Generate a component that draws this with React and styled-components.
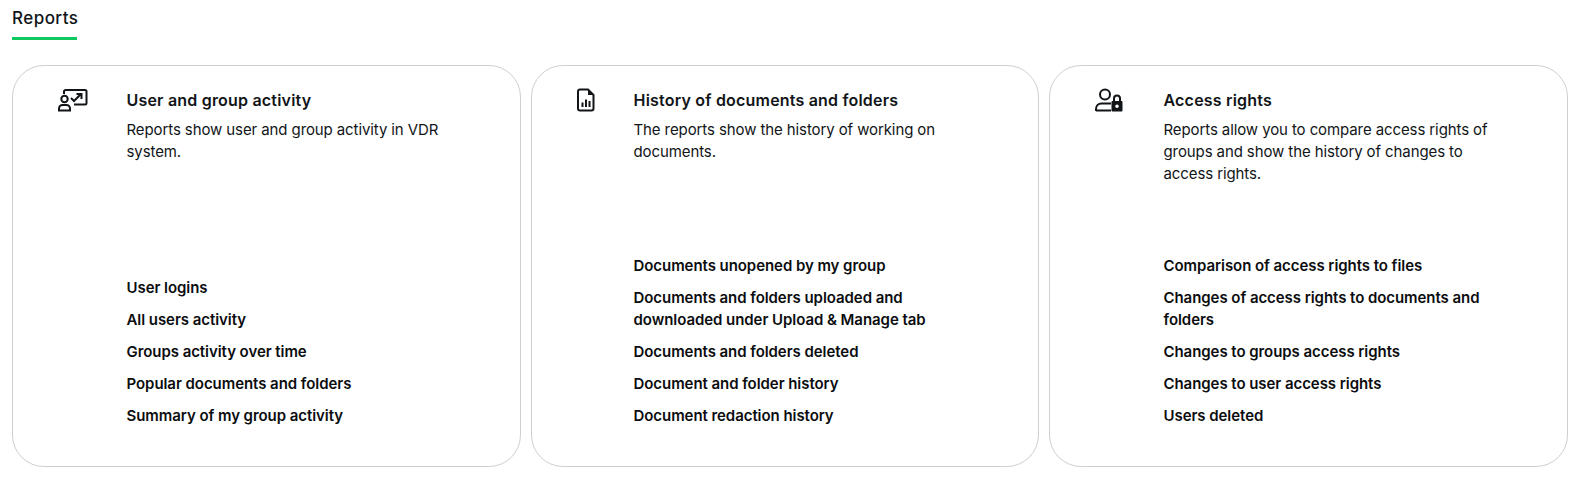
import React from 'react';
import styled, { createGlobalStyle } from 'styled-components';

const GlobalStyle = createGlobalStyle`
  html, body {
    margin: 0;
    padding: 0;
    background: #fff;
    color: #111518;
    font-family: Inter, "Liberation Sans", sans-serif;
  }
`;

const Page = styled.div`
  width: 1581px;
  height: 483px;
  box-sizing: border-box;
  padding: 0 13px 0 12px;
  overflow: hidden;
`;

const Tabs = styled.div`
  display: flex;
  height: 40px;
  margin-bottom: 25px;
`;

const Tab = styled.div`
  width: 65px;
  height: 40px;
  box-sizing: border-box;
  border-bottom: 3px solid #0fc85f;
  font-size: 17px;
  font-weight: 500;
  line-height: 36px;
  letter-spacing: 0.45px;
`;

const Cards = styled.div`
  display: grid;
  grid-template-columns: 509px 508px 519px;
  column-gap: 10px;
`;

const Card = styled.section`
  height: 402px;
  box-sizing: border-box;
  border: 1px solid #cfcfcf;
  border-radius: 32px;
  padding: 22px 40px 39px 45px;
  display: flex;
  gap: ${props => props.$gap}px;
`;

const IconBox = styled.div`
  flex: 0 0 ${props => props.$width}px;
  height: 28px;
  color: #111518;
  svg {
    display: block;
  }
`;

const Body = styled.div`
  flex: 1;
  display: flex;
  flex-direction: column;
`;

const Title = styled.h3`
  margin: 0 0 7px;
  font-size: 16px;
  line-height: 24px;
  font-weight: 600;
  letter-spacing: 0.2px;
`;

const Description = styled.p`
  margin: 0;
  width: 335px;
  font-size: 15px;
  line-height: 22px;
  font-weight: 400;
  letter-spacing: -0.1px;
`;

const Links = styled.ul`
  list-style: none;
  margin: auto 0 0;
  padding: 0;
  display: flex;
  flex-direction: column;
  gap: 10px;
`;

const LinkItem = styled.li`
  font-size: 15px;
  line-height: 22px;
  font-weight: 600;
  color: #0b0d0f;
  letter-spacing: -0.06px;
  max-width: 335px;
`;

const ActivityIcon = () => (
  <svg width="30" height="24" viewBox="0 0 30 24" fill="none" stroke="currentColor" strokeWidth="2">
    <path d="M6 6V3.5C6 2.7 6.7 2 7.5 2H27C27.8 2 28.5 2.7 28.5 3.5V15C28.5 15.8 27.8 16.5 27 16.5H16" />
    <circle cx="6.5" cy="11" r="3.2" />
    <path d="M1 22.5V20.5C1 18.6 2.6 17 4.5 17H8.5C10.4 17 12 18.6 12 20.5V22.5H1Z" />
    <path d="M13 10L16 13L23 6M18.5 6H23.5V11" />
  </svg>
);

const DocumentIcon = () => (
  <svg width="18" height="24" viewBox="0 0 18 24" fill="none">
    <path d="M3 1.5H11L16.5 7V20.5C16.5 21.6 15.6 22.5 14.5 22.5H3C1.9 22.5 1 21.6 1 20.5V3.5C1 2.4 1.9 1.5 3 1.5Z" stroke="currentColor" strokeWidth="2" />
    <path d="M11 1.5L16.5 7H11V1.5Z" fill="currentColor" />
    <path d="M4.5 14.5H6.5V19H4.5ZM8 11.5H10V19H8ZM11.5 13H13.5V19H11.5Z" fill="currentColor" />
  </svg>
);

const AccessIcon = () => (
  <svg width="30" height="24" viewBox="0 0 30 24" fill="none">
    <circle cx="10" cy="6.5" r="5" stroke="currentColor" strokeWidth="2" />
    <path d="M1 23V21C1 17.5 3.5 15.5 6.5 15.5H16" stroke="currentColor" strokeWidth="2" />
    <path d="M1 22.5H16" stroke="currentColor" strokeWidth="2" />
    <path d="M19 13V10.5C19 8.8 20.3 7.5 22 7.5C23.7 7.5 25 8.8 25 10.5V13" stroke="currentColor" strokeWidth="2" />
    <path fillRule="evenodd" clipRule="evenodd" d="M17.5 13H26.5C27 13 27.5 13.5 27.5 14V22.5C27.5 23 27 23.5 26.5 23.5H17.5C17 23.5 16.5 23 16.5 22.5V14C16.5 13.5 17 13 17.5 13ZM22 16.5A1.8 1.8 0 1 0 22 20.1A1.8 1.8 0 1 0 22 16.5Z" fill="currentColor" />
  </svg>
);

const cards = [
  {
    title: 'User and group activity',
    description: 'Reports show user and group activity in VDR system.',
    icon: <ActivityIcon />,
    iconWidth: 30,
    gap: 38.5,
    links: ['User logins', 'All users activity', 'Groups activity over time', 'Popular documents and folders', 'Summary of my group activity'],
  },
  {
    title: 'History of documents and folders',
    description: 'The reports show the history of working on documents.',
    icon: <DocumentIcon />,
    iconWidth: 18,
    gap: 38.5,
    links: ['Documents unopened by my group', 'Documents and folders uploaded and downloaded under Upload & Manage tab', 'Documents and folders deleted', 'Document and folder history', 'Document redaction history'],
  },
  {
    title: 'Access rights',
    description: 'Reports allow you to compare access rights of groups and show the history of changes to access rights.',
    icon: <AccessIcon />,
    iconWidth: 30,
    gap: 38.5,
    links: ['Comparison of access rights to files', 'Changes of access rights to documents and folders', 'Changes to groups access rights', 'Changes to user access rights', 'Users deleted'],
  },
];

const App = () => (
  <Page>
    <GlobalStyle />
    <Tabs>
      <Tab>Reports</Tab>
    </Tabs>
    <Cards>
      {cards.map(card => (
        <Card key={card.title} $gap={card.gap}>
          <IconBox $width={card.iconWidth}>{card.icon}</IconBox>
          <Body>
            <Title>{card.title}</Title>
            <Description>{card.description}</Description>
            <Links>
              {card.links.map(link => <LinkItem key={link}>{link}</LinkItem>)}
            </Links>
          </Body>
        </Card>
      ))}
    </Cards>
  </Page>
);

export default App;
